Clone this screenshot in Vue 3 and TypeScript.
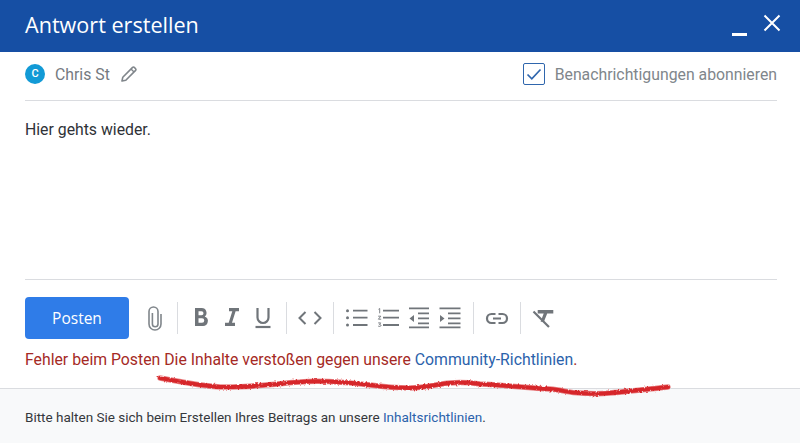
<script setup lang="ts">
const scribblePath =
  "M160 378C178 381 195 385 220 387C245 388 272 384 300 382C320 380 345 382 370 385C385 387 398 388 410 388C425 388 437 384 450 383C462 382 472 383 480 384C505 385 528 388 550 389C562 390 570 393 580 393C592 394 600 394 610 393C622 392 630 391 640 390C650 389 660 388 668 387";
</script>

<template>
  <div class="dialog">
    <header class="head">
      <h1 class="title">Antwort erstellen</h1>
      <div class="win">
        <span class="min"></span>
        <svg class="close" width="18" height="18" viewBox="0 0 18 18"><path d="M1.500 1.500l15 15M16.500 1.500l-15 15" stroke="#fff" stroke-width="2" fill="none"/></svg>
      </div>
    </header>
    <main class="main">
      <div class="meta">
        <div class="who">
          <span class="avatar">C</span>
          <span class="name">Chris St</span>
          <svg width="18" height="18" viewBox="0 0 18 18" class="pen"><path d="M2 16l.8-3.800L12.600 2.400a1.200 1.200 0 0 1 1.700 0l1.300 1.300a1.200 1.200 0 0 1 0 1.700L5.800 15.200z" fill="none" stroke="#80868b" stroke-width="1.600" stroke-linejoin="round"/><path d="M11 4l3 3" stroke="#80868b" stroke-width="1.400"/></svg>
        </div>
        <label class="sub">
          <span class="box"><svg width="22" height="22" viewBox="0 0 22 22"><path d="M4.500 11.500l4.300 4.300 8.700-9.300" fill="none" stroke="#2f66ad" stroke-width="1.700"/></svg></span>
          <span class="sub-text">Benachrichtigungen abonnieren</span>
        </label>
      </div>
      <div class="editor">Hier gehts wieder.</div>
      <div class="toolbar">
        <button class="post">Posten</button>
        <svg class="clip" width="18" height="28" viewBox="0 0 18 28"><path d="M15 10v10a6 6 0 0 1-12 0V7.500a4.500 4.500 0 0 1 9 0V20a2.800 2.800 0 0 1-5.600 0V9" fill="none" stroke="#80868b" stroke-width="1.600"/></svg>
        <span class="sep"></span>
        <div class="group">
          <svg class="tool" viewBox="0 0 24 24"><path d="M6 2h6.800a4.700 4.700 0 0 1 2.900 8.400A5 5 0 0 1 13.200 20H6zM9.500 5.200v4h3a2 2 0 0 0 0-4zM9.500 12.300v4.500h3.500a2.250 2.250 0 0 0 0-4.500z" fill="#70757a" fill-rule="evenodd"/></svg>
          <svg class="tool" viewBox="0 0 24 24"><path d="M9 2h10v3.200h-3.400l-3.600 11.600h3V20H5v-3.200h3.700l3.600-11.600H9z" fill="#70757a"/></svg>
          <svg class="tool" viewBox="0 0 24 24"><path d="M6.500 2v9.500a5.500 5.500 0 0 0 11 0V2" fill="none" stroke="#70757a" stroke-width="2.200"/><path d="M4.500 21h15" stroke="#70757a" stroke-width="2.200"/></svg>
        </div>
        <span class="sep"></span>
        <svg class="tool" viewBox="0 0 24 24"><path d="M7.500 6L1.500 12l6 6M16.500 6l6 6-6 6" fill="none" stroke="#70757a" stroke-width="2"/></svg>
        <span class="sep"></span>
        <div class="group">
          <svg class="tool" viewBox="0 0 24 24"><g fill="#70757a"><circle cx="2.500" cy="4.700" r="1.500"/><circle cx="2.500" cy="11.700" r="1.500"/><circle cx="2.500" cy="19" r="1.500"/></g><path d="M8 4.700h14.500M8 11.700h14.500M8 19h14.500" stroke="#70757a" stroke-width="1.800"/></svg>
          <svg class="tool" viewBox="0 0 24 24"><path d="M7 4.700h16M7 11.700h16M7 19h16" stroke="#70757a" stroke-width="1.800"/><path d="M2.500 3.300l1.200-.8v4.800M2.200 10.200h2.600l-2.400 3h2.800M2.200 16.900h2.500l-1.300 1.600c1.300 0 1.600.6 1.600 1 0 .9-1.500 1.200-2.800.6" fill="none" stroke="#70757a" stroke-width=".9"/></svg>
          <svg class="tool" viewBox="0 0 24 24"><path d="M2 2.300h20M11 7.300h11M11 12.300h11M11 17.300h11M2 21.300h20" stroke="#70757a" stroke-width="1.800"/><path d="M7 9v7l-4.500-3.500z" fill="#70757a"/></svg>
          <svg class="tool" viewBox="0 0 24 24"><path d="M1.500 2.300h21M10 7.300h12.500M10 12.300h12.500M10 17.300h12.500M1.500 21.300h21" stroke="#70757a" stroke-width="1.800"/><path d="M2 9v7l4.500-3.500z" fill="#70757a"/></svg>
        </div>
        <span class="sep"></span>
        <svg class="tool" viewBox="0 0 24 24"><path d="M10.500 8h-4a4.500 4.500 0 0 0 0 9h4M13.500 8h4a4.500 4.500 0 0 1 0 9h-4M8 12.500h8" fill="none" stroke="#70757a" stroke-width="2.200"/></svg>
        <span class="sep"></span>
        <svg class="tool" viewBox="0 0 24 24"><path d="M5.700 4h15.600v3.600h-6.100l-3.300 8.200h-3.300l3.100-8.200H5.700z" fill="#70757a"/><path d="M1.500 5.500L17 21" stroke="#70757a" stroke-width="2.200"/></svg>
      </div>
      <p class="error">Fehler beim Posten Die Inhalte verstoßen gegen unsere <a class="link">Community-Richtlinien</a>.</p>
    </main>
    <footer class="foot">Bitte halten Sie sich beim Erstellen Ihres Beitrags an unsere <a class="link">Inhaltsrichtlinien</a>.</footer>
    <svg class="scribble" width="800" height="443" viewBox="0 0 800 443">
      <defs>
        <filter id="rough" x="-5%" y="-50%" width="110%" height="200%">
          <feTurbulence type="fractalNoise" baseFrequency="0.5" numOctaves="2" seed="4"/>
          <feDisplacementMap in="SourceGraphic" scale="3"/>
        </filter>
      </defs>
      <path :d="scribblePath" fill="none" stroke="#e2575a" stroke-width="5.500" stroke-linecap="round" opacity="0.7" filter="url(#rough)"/>
      <path :d="scribblePath" fill="none" stroke="#d6282c" stroke-width="4" stroke-linecap="round" filter="url(#rough)"/>
    </svg>
  </div>
</template>

<style scoped>
.dialog { position: relative; width: 800px; height: 443px; display: flex; flex-direction: column; background: #fff; overflow: hidden; font-family: Roboto, "Liberation Sans", sans-serif; }
.head { height: 52px; background: #164fa4; color: #fff; display: flex; align-items: center; justify-content: space-between; padding: 0 19px 3px 25px; box-sizing: border-box; flex: none; }
.title { margin: 0; font: 400 21.600px/28px "Open Sans", Roboto, sans-serif; }
.win { display: flex; align-items: flex-start; gap: 16px; }
.min { width: 15px; height: 3px; background: #fff; margin-top: 19px; }
.close { display: block; margin-top: 0; }
.main { flex: 1; padding: 0 23px 0 25px; display: flex; flex-direction: column; min-height: 0; }
.meta { height: 49px; box-sizing: border-box; display: flex; align-items: center; justify-content: space-between; border-bottom: 1px solid #dadce0; flex: none; padding-bottom: 5px; }
.who { display: flex; align-items: center; }
.avatar { width: 20px; height: 20px; border-radius: 50%; background: #129ad6; color: #fff; font-size: 11px; font-weight: 500; display: flex; align-items: center; justify-content: center; }
.name { margin-left: 10px; padding-top: 2px; font-size: 15.800px; color: #757a7f; }
.pen { margin-left: 10px; }
.sub { display: flex; align-items: center; }
.box { width: 22px; height: 22px; box-sizing: border-box; border: 1.500px solid #2f66ad; border-radius: 2px; display: flex; align-items: center; justify-content: center; }
.box svg { flex: none; }
.sub-text { margin-left: 10px; padding-top: 2px; font-size: 15.800px; color: #80868b; }
.editor { height: 179px; box-sizing: border-box; border-bottom: 1px solid #dadce0; padding-top: 19px; font-size: 15.800px; line-height: 20px; color: #2f3237; flex: none; }
.toolbar { margin-top: 17px; height: 42px; display: flex; align-items: center; flex: none; }
.post { width: 104px; height: 42px; border: 0; border-radius: 4px; background: #2f7ce8; color: #fff; font: 500 15.500px "Open Sans", Roboto, sans-serif; padding: 0; flex: none; }
.group { display: flex; gap: 7px; }
.tool { width: 24px; height: 24px; flex: none; display: block; }
.clip { margin-left: 16.500px; margin-right: 2px; flex: none; }
.sep { width: 1px; height: 32px; background: #dadce0; flex: none; margin: 0 10.500px 0 11.500px; }
.error { margin: 11px 0 0; font-size: 15.800px; line-height: 20px; color: #a52a25; }
.link { color: #2b62ab; }
.foot { height: 55px; flex: none; box-sizing: border-box; border-top: 1px solid #dadce0; background: #f8f9fa; padding: 18px 25px 0; font-size: 13.500px; line-height: 20px; color: #35383c; }
.scribble { position: absolute; left: 0; top: 0; pointer-events: none; }
</style>
